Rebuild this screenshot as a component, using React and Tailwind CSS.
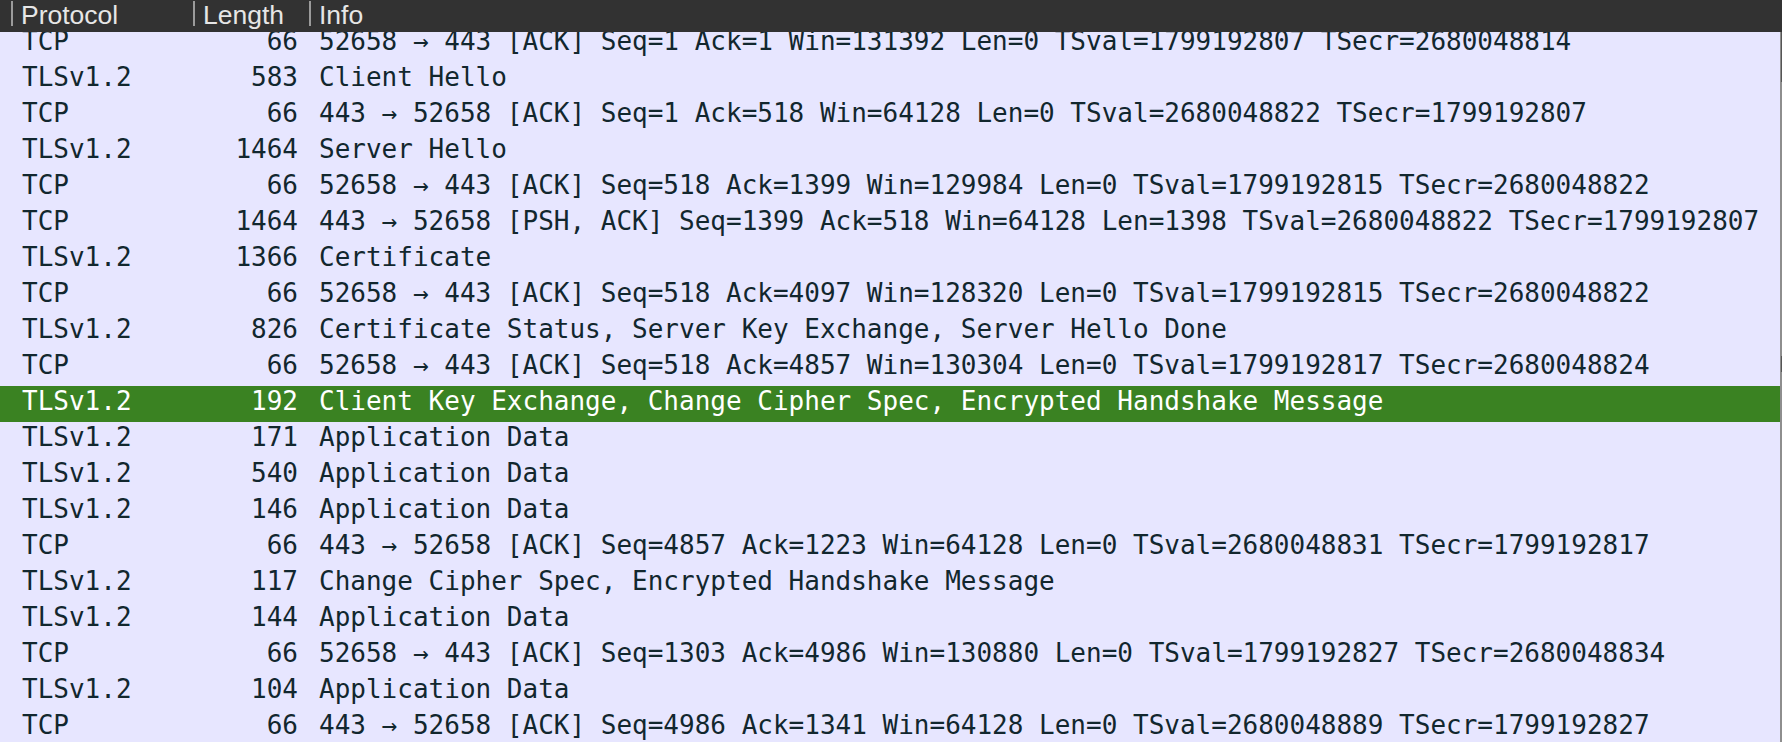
import React from 'react';

const packets = [
  ['TCP', '66', '52658 → 443 [ACK] Seq=1 Ack=1 Win=131392 Len=0 TSval=1799192807 TSecr=2680048814'],
  ['TLSv1.2', '583', 'Client Hello'],
  ['TCP', '66', '443 → 52658 [ACK] Seq=1 Ack=518 Win=64128 Len=0 TSval=2680048822 TSecr=1799192807'],
  ['TLSv1.2', '1464', 'Server Hello'],
  ['TCP', '66', '52658 → 443 [ACK] Seq=518 Ack=1399 Win=129984 Len=0 TSval=1799192815 TSecr=2680048822'],
  ['TCP', '1464', '443 → 52658 [PSH, ACK] Seq=1399 Ack=518 Win=64128 Len=1398 TSval=2680048822 TSecr=1799192807'],
  ['TLSv1.2', '1366', 'Certificate'],
  ['TCP', '66', '52658 → 443 [ACK] Seq=518 Ack=4097 Win=128320 Len=0 TSval=1799192815 TSecr=2680048822'],
  ['TLSv1.2', '826', 'Certificate Status, Server Key Exchange, Server Hello Done'],
  ['TCP', '66', '52658 → 443 [ACK] Seq=518 Ack=4857 Win=130304 Len=0 TSval=1799192817 TSecr=2680048824'],
  ['TLSv1.2', '192', 'Client Key Exchange, Change Cipher Spec, Encrypted Handshake Message', true],
  ['TLSv1.2', '171', 'Application Data'],
  ['TLSv1.2', '540', 'Application Data'],
  ['TLSv1.2', '146', 'Application Data'],
  ['TCP', '66', '443 → 52658 [ACK] Seq=4857 Ack=1223 Win=64128 Len=0 TSval=2680048831 TSecr=1799192817'],
  ['TLSv1.2', '117', 'Change Cipher Spec, Encrypted Handshake Message'],
  ['TLSv1.2', '144', 'Application Data'],
  ['TCP', '66', '52658 → 443 [ACK] Seq=1303 Ack=4986 Win=130880 Len=0 TSval=1799192827 TSecr=2680048834'],
  ['TLSv1.2', '104', 'Application Data'],
  ['TCP', '66', '443 → 52658 [ACK] Seq=4986 Ack=1341 Win=64128 Len=0 TSval=2680048889 TSecr=1799192827'],
];

function HeaderCell({ label, width }) {
  return (
    <div className={`flex h-full shrink-0 ${width}`}>
      <div className="mt-[1px] h-[25px] w-[2px] bg-[#9b9b9b]" />
      <span className="pl-[8px] leading-[30px]">{label}</span>
    </div>
  );
}

export default function App() {
  return (
    <div className="flex h-[742px] w-full flex-col overflow-hidden bg-[#e7e6ff]">
      <div
        className="relative z-10 flex h-[32px] shrink-0 bg-[#323232] text-[26.5px] text-[#e6e6e6]"
        style={{ fontFamily: '"Liberation Sans", Arial, sans-serif' }}
      >
        <div className="w-[11px] shrink-0" />
        <HeaderCell label="Protocol" width="w-[182px]" />
        <HeaderCell label="Length" width="w-[116px]" />
        <HeaderCell label="Info" width="flex-1" />
      </div>

      <div className="flex min-h-0 flex-1">
        <div
          className="min-w-0 flex-1 overflow-hidden text-[26px] text-[#12272e]"
          style={{ fontFamily: '"DejaVu Sans Mono", monospace' }}
        >
          <div className="-mt-[6px]">
            {packets.map(([proto, len, info, selected], i) => (
              <div
                key={i}
                className={`flex h-[36px] whitespace-pre leading-[30px] ${
                  selected ? 'bg-[#3a8222] text-white' : ''
                }`}
              >
                <div className="w-[193px] shrink-0 pl-[22px]">{proto}</div>
                <div className="w-[116px] shrink-0 pr-[11px] text-right">{len}</div>
                <div className="flex-1 pl-[10px]">{info}</div>
              </div>
            ))}
          </div>
        </div>

        <div className="flex w-[2px] shrink-0 flex-col bg-[#8e8e8e]">
          <div className="ml-[1px] h-[50px] w-[1px] bg-[#555555]" />
          <div className="h-[274px]" />
          <div className="ml-[1px] h-[16px] w-[1px] bg-[#555555]" />
        </div>
      </div>
    </div>
  );
}
